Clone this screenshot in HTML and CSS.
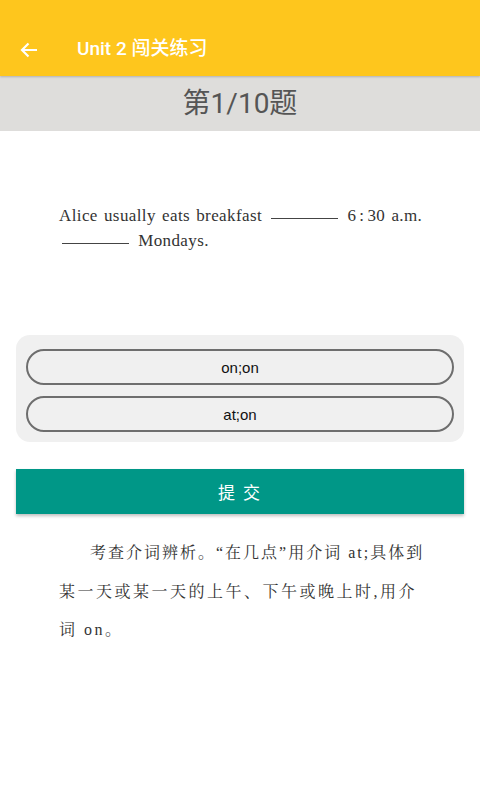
FILE: index.html
```html
<!DOCTYPE html>
<html>
<head>
<meta charset="utf-8">
<link rel="stylesheet" href="styles.css">
</head>
<body>
<div class="appbar">
  <svg class="back" width="18" height="16" viewBox="0 0 18 16"><path d="M17 8H2M8.5 1.5L2 8l6.5 6.5" fill="none" stroke="#fff" stroke-width="2.2"/></svg>
  <span class="title">Unit 2 闯关练习</span>
</div>
<div class="counter">第1/10题</div>
<div class="question">
  <p>Alice usually eats breakfast <span class="blank"></span> 6<span class="colon">:</span>30 a.m.</p>
  <p><span class="blank"></span> Mondays.</p>
</div>
<div class="options">
  <div class="option">on;on</div>
  <div class="option">at;on</div>
</div>
<div class="submit">提 交</div>
<div class="explain">
  <p class="indent">考查介词辨析。“在几点”用介词 at;具体到</p>
  <p>某一天或某一天的上午、下午或晚上时,用介</p>
  <p>词 on。</p>
</div>
</body>
</html>
```
FILE: styles.css
```css
html, body { margin: 0; padding: 0; background: #fff; }
body { width: 480px; height: 800px; overflow: hidden; font-family: "Roboto", "Noto Sans CJK SC", sans-serif; }
.appbar {
  height: 76px; background: #fec61d; display: flex; align-items: flex-end;
  padding-bottom: 16px; box-sizing: border-box; position: relative; z-index: 1;
  box-shadow: 0 1px 2px rgba(0,0,0,0.2);
}
.back { margin-left: 20px; margin-bottom: 2px; }
.title { color: #fff; font-size: 19px; font-weight: 500; margin-left: 39px; line-height: 22px; }
.counter {
  height: 55px; background: #dedddb; color: #555; font-size: 28px;
  text-align: center; line-height: 56px;
}
.question {
  padding: 72px 0 0 59px; height: 128px; box-sizing: border-box;
  font-family: "Liberation Serif", "DejaVu Serif", serif; font-size: 17px; color: #333; letter-spacing: 0.4px;
}
.question p { margin: 0; line-height: 25px; height: 25px; word-spacing: 1.5px; }
.blank { display: inline-block; width: 67px; border-bottom: 1px solid #444; vertical-align: 2px; margin: 0 3px; }
.colon { margin: 0 3px; }
.options {
  margin: 76px 16px 0; background: #f0f0f0; border-radius: 14px;
  padding: 14px 10px 10px; display: flex; flex-direction: column; gap: 11px; height: 107px; box-sizing: border-box;
}
.option {
  height: 36px; box-sizing: border-box; border: 2px solid #6e6e6e; border-radius: 18px;
  display: flex; align-items: center; justify-content: center; font-size: 15px; color: #111;
  font-family: "Liberation Sans", "Noto Sans CJK SC", sans-serif;
}
.submit {
  margin: 27px 16px 0; height: 45px; background: #009787; color: #fff; font-size: 17px;
  display: flex; align-items: center; justify-content: center; letter-spacing: 2px;
  box-shadow: 0 2px 3px rgba(0,0,0,0.25);
}
.explain {
  padding: 20px 0 0 59px; font-family: "Liberation Serif", "Noto Serif CJK SC", "Noto Sans CJK SC", serif;
  font-size: 16px; color: #333; letter-spacing: 2.5px;
}
.explain p { margin: 0; line-height: 38.5px; white-space: nowrap; }
.explain .indent { text-indent: 31px; letter-spacing: 2px; }
```
